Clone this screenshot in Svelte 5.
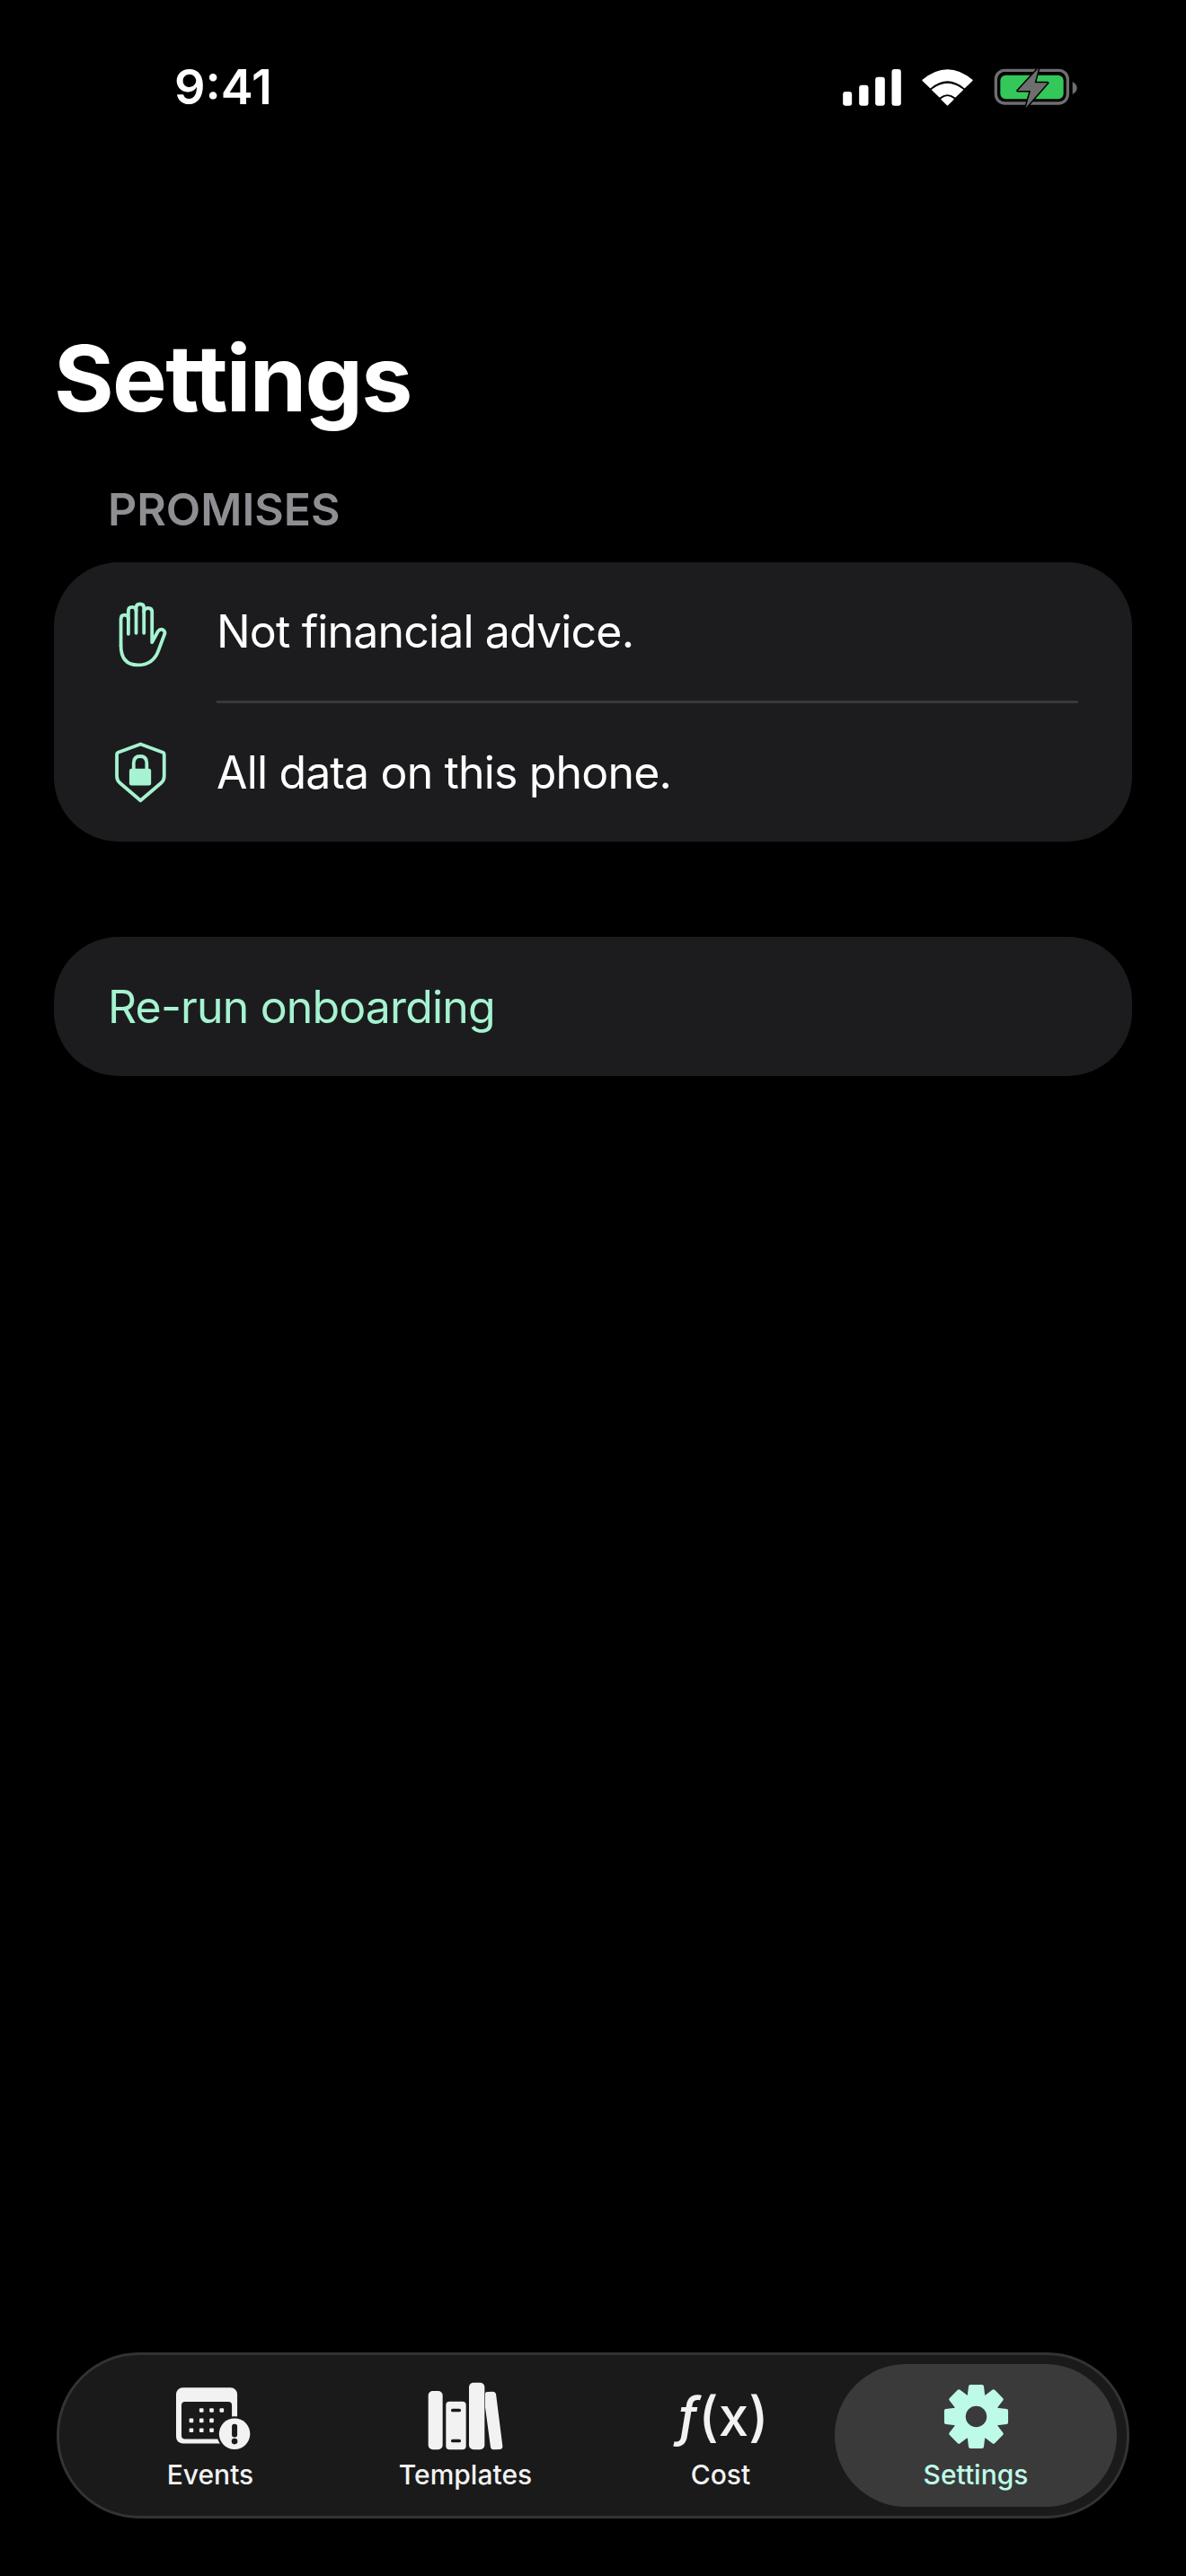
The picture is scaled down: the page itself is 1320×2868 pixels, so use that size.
<script>
    const tabs = [
        { id: 'events', label: 'Events' },
        { id: 'templates', label: 'Templates' },
        { id: 'cost', label: 'Cost' },
        { id: 'settings', label: 'Settings', active: true }
    ];

    // 8 teeth around (172,152), in 3x crop units
    function gear_path() {
        const cx = 172, cy = 152;
        let d = '';
        for (let i = 0; i < 8; i++) {
            const a = (i * Math.PI) / 4 - Math.PI / 2;
            const pts = [
                [72, -0.33],
                [102, -0.19],
                [102, 0.19],
                [72, 0.33]
            ];
            for (const [r, o] of pts) {
                const x = cx + r * Math.cos(a + o);
                const y = cy + r * Math.sin(a + o);
                d += (d ? 'L' : 'M') + x.toFixed(1) + ' ' + y.toFixed(1) + ' ';
            }
        }
        return d + 'Z';
    }
    const gear = gear_path();
</script>

<div class="screen">
    <div class="status-bar">
        <span class="time">9:41</span>
        <div class="status-icons">
            <svg class="signal" viewBox="112 48 194 123" fill="#fff">
                <rect x="112" y="123" width="30" height="47" rx="9" />
                <rect x="166" y="101" width="31" height="69" rx="9" />
                <rect x="220" y="74" width="32" height="96" rx="9" />
                <rect x="275" y="48" width="31" height="122" rx="9" />
            </svg>
            <svg class="wifi" viewBox="372 46 176 126" fill="#fff" stroke="#fff" stroke-width="5" stroke-linejoin="round">
                <path d="M378 86 Q460 18 542 86 L517 110 Q460 62 403 110 Z" />
                <path d="M410 118 Q460 80 510 118 L486 141 Q460 122 434 141 Z" />
                <path d="M441 149 Q460 134 479 149 L460 168 Z" />
            </svg>
            <svg class="battery" viewBox="615 40 282 135">
                <rect x="622" y="50" width="240" height="110" rx="30" fill="none" stroke="#6e6e6e" stroke-width="10" />
                <rect x="637" y="66" width="211" height="80" rx="18" fill="#34c759" />
                <path d="M878 88 Q893 96 893 109 Q893 122 878 130 Z" fill="#6e6e6e" />
                <path d="M765 42 L695 118 H738 L722 175 L795 92 H752 Z" fill="#6e6e6e" stroke="#000" stroke-width="9" stroke-linejoin="round" paint-order="stroke" />
            </svg>
        </div>
    </div>

    <h1>Settings</h1>

    <div class="section-label">PROMISES</div>
    <div class="card">
        <div class="row">
            <div class="row-icon">
                <svg viewBox="0 0 270 300" fill="none" stroke="#a5f3d0" stroke-width="11" stroke-linecap="round" stroke-linejoin="round">
                    <path d="M76 195 V110 Q76 97 88 97 Q100 97 100 110 V158" />
                    <path d="M100 110 V84 Q100 72 112 72 Q125 72 125 84 V155" />
                    <path d="M125 84 V74 Q125 62 137 62 Q150 62 150 74 V155" />
                    <path d="M150 88 Q150 75 163 75 Q176 75 176 88 V185 L195 150 Q203 140 213 146 Q220 152 215 162 L197 210 Q180 258 130 258 Q76 258 76 195" />
                </svg>
            </div>
            <span>Not financial advice.</span>
        </div>
        <div class="divider"></div>
        <div class="row">
            <div class="row-icon">
                <svg viewBox="0 0 270 300" fill="none">
                    <path d="M139 59 L211 86 Q215 88 215 92 V162 Q215 175 205 184 L139 240 L73 184 Q63 175 63 162 V92 Q63 88 67 86 Z" stroke="#a5f3d0" stroke-width="11" stroke-linejoin="round" />
                    <path d="M117 140 V120 Q117 98 138 98 Q159 98 159 120 V140" stroke="#a5f3d0" stroke-width="11" />
                    <rect x="103" y="138" width="70" height="54" rx="7" fill="#a5f3d0" />
                </svg>
            </div>
            <span>All data on this phone.</span>
        </div>
    </div>

    <div class="card action">
        <span>Re-run onboarding</span>
    </div>

    <nav class="tab-bar">
        {#each tabs as tab}
            <div class="tab" class:active={tab.active}>
                <div class="tab-icon">
                    {#if tab.id === 'events'}
                        <svg class="ic-events" viewBox="85 55 250 212">
                            <rect x="85" y="58" width="205" height="187" rx="22" fill="#f2f2f2" />
                            <rect x="103" y="105" width="169" height="125" rx="12" fill="#1a1a1a" />
                            <g fill="#f2f2f2">
                                <rect x="163" y="127" width="14" height="14" rx="3" />
                                <rect x="197" y="127" width="14" height="14" rx="3" />
                                <rect x="231" y="127" width="14" height="14" rx="3" />
                                <rect x="129" y="161" width="14" height="14" rx="3" />
                                <rect x="163" y="161" width="14" height="14" rx="3" />
                                <rect x="197" y="161" width="14" height="14" rx="3" />
                                <rect x="129" y="194" width="14" height="14" rx="3" />
                                <rect x="163" y="194" width="14" height="14" rx="3" />
                                <rect x="197" y="194" width="14" height="14" rx="3" />
                            </g>
                            <circle cx="281" cy="213" r="59" fill="#1a1a1a" />
                            <circle cx="281" cy="213" r="52" fill="#f2f2f2" />
                            <rect x="272" y="180" width="18" height="44" rx="8" fill="#1a1a1a" />
                            <circle cx="281" cy="238" r="10" fill="#1a1a1a" />
                        </svg>
                    {:else if tab.id === 'templates'}
                        <svg class="ic-templates" viewBox="80 66 252 228" fill="#f2f2f2">
                            <rect x="82" y="96" width="48" height="196" rx="15" />
                            <rect x="141" y="131" width="67" height="161" rx="12" />
                            <rect x="158" y="155" width="33" height="11" rx="5" fill="#1a1a1a" />
                            <rect x="158" y="257" width="33" height="11" rx="5" fill="#1a1a1a" />
                            <rect x="218" y="68" width="52" height="224" rx="15" />
                            <path d="M272 106 Q272 99 280 99 L298 98 Q306 98 308 106 L330 280 Q331 290 322 291 L300 292 Q292 292 290 284 L272 150 Z" />
                        </svg>
                    {:else if tab.id === 'cost'}
                        <span class="fx"><i>ƒ</i>(x)</span>
                    {:else}
                        <svg class="ic-gear" viewBox="60 40 224 224">
                            <path d={gear} fill="#bdfbe8" stroke="#bdfbe8" stroke-width="12" stroke-linejoin="round" />
                            <circle cx="172" cy="152" r="35" fill="#3a3a3a" />
                        </svg>
                    {/if}
                </div>
                <span class="tab-label">{tab.label}</span>
            </div>
        {/each}
    </nav>
</div>

<style>
    :global(body) {
        margin: 0;
        background: #000;
    }

    .screen {
        display: flex;
        flex-direction: column;
        width: 1320px;
        height: 2868px;
        box-sizing: border-box;
        padding: 0 60px 64px;
        background: #000;
        color: #fff;
        font-family: Inter, 'Liberation Sans', sans-serif;
        overflow: hidden;
    }

    .status-bar {
        display: flex;
        justify-content: space-between;
        align-items: center;
        height: 42px;
        margin-top: 76px;
        padding: 0 60px 0 134px;
    }

    .time {
        font-size: 54px;
        font-weight: 600;
        line-height: 42px;
    }

    .status-icons {
        display: flex;
        align-items: center;
        gap: 22px;
    }

    .signal {
        width: 65px;
        height: 41px;
    }

    .wifi {
        width: 59px;
        height: 42px;
    }

    .battery {
        width: 94px;
        height: 45px;
    }

    h1 {
        margin: 242px 0 0;
        font-size: 102px;
        font-weight: 700;
        letter-spacing: -1.7px;
        line-height: 123px;
    }

    .section-label {
        margin: 54px 60px 0;
        color: #8e8e93;
        font-size: 50px;
        font-weight: 600;
        line-height: 60px;
    }

    .card {
        margin-top: 29px;
        background: #1c1c1e;
        border-radius: 72px;
        font-size: 50px;
        letter-spacing: -0.85px;
        line-height: 62px;
    }

    .row {
        display: flex;
        align-items: center;
        height: 154px;
    }

    .row-icon {
        width: 181px;
        display: flex;
        justify-content: flex-end;
        padding-right: 39px;
        box-sizing: border-box;
    }

    .row-icon svg {
        width: 94px;
        height: 104px;
        display: block;
    }

    .divider {
        height: 3px;
        margin: 0 60px 0 181px;
        background: #38383a;
    }

    .action {
        display: flex;
        align-items: center;
        height: 155px;
        margin-top: 106px;
        padding-left: 60px;
        color: #a5f3d0;
    }

    .tab-bar {
        display: flex;
        margin: auto 3px 0;
        height: 185px;
        box-sizing: border-box;
        padding: 10px 26px;
        background: #1a1a1a;
        border: 3px solid #333;
        border-radius: 92px;
    }

    .tab {
        flex: 1;
        margin: 0 -15px;
        display: flex;
        flex-direction: column;
        align-items: center;
        border-radius: 80px;
        color: #f2f2f2;
    }

    .tab.active {
        background: #3a3a3a;
        color: #bdfbe8;
    }

    .tab-icon {
        display: flex;
        align-items: flex-end;
        justify-content: center;
        height: 96px;
    }

    .ic-events {
        width: 83px;
        height: 71px;
        margin-left: 6px;
    }

    .ic-templates {
        width: 84px;
        height: 76px;
    }

    .ic-gear {
        width: 75px;
        height: 75px;
    }

    .fx {
        font-size: 60px;
        font-weight: 500;
        line-height: 76px;
        margin-left: 4px;
    }

    .fx i {
        font-style: italic;
    }

    .tab-label {
        margin-top: 9px;
        font-size: 30px;
        font-weight: 500;
        line-height: 36px;
    }
</style>
